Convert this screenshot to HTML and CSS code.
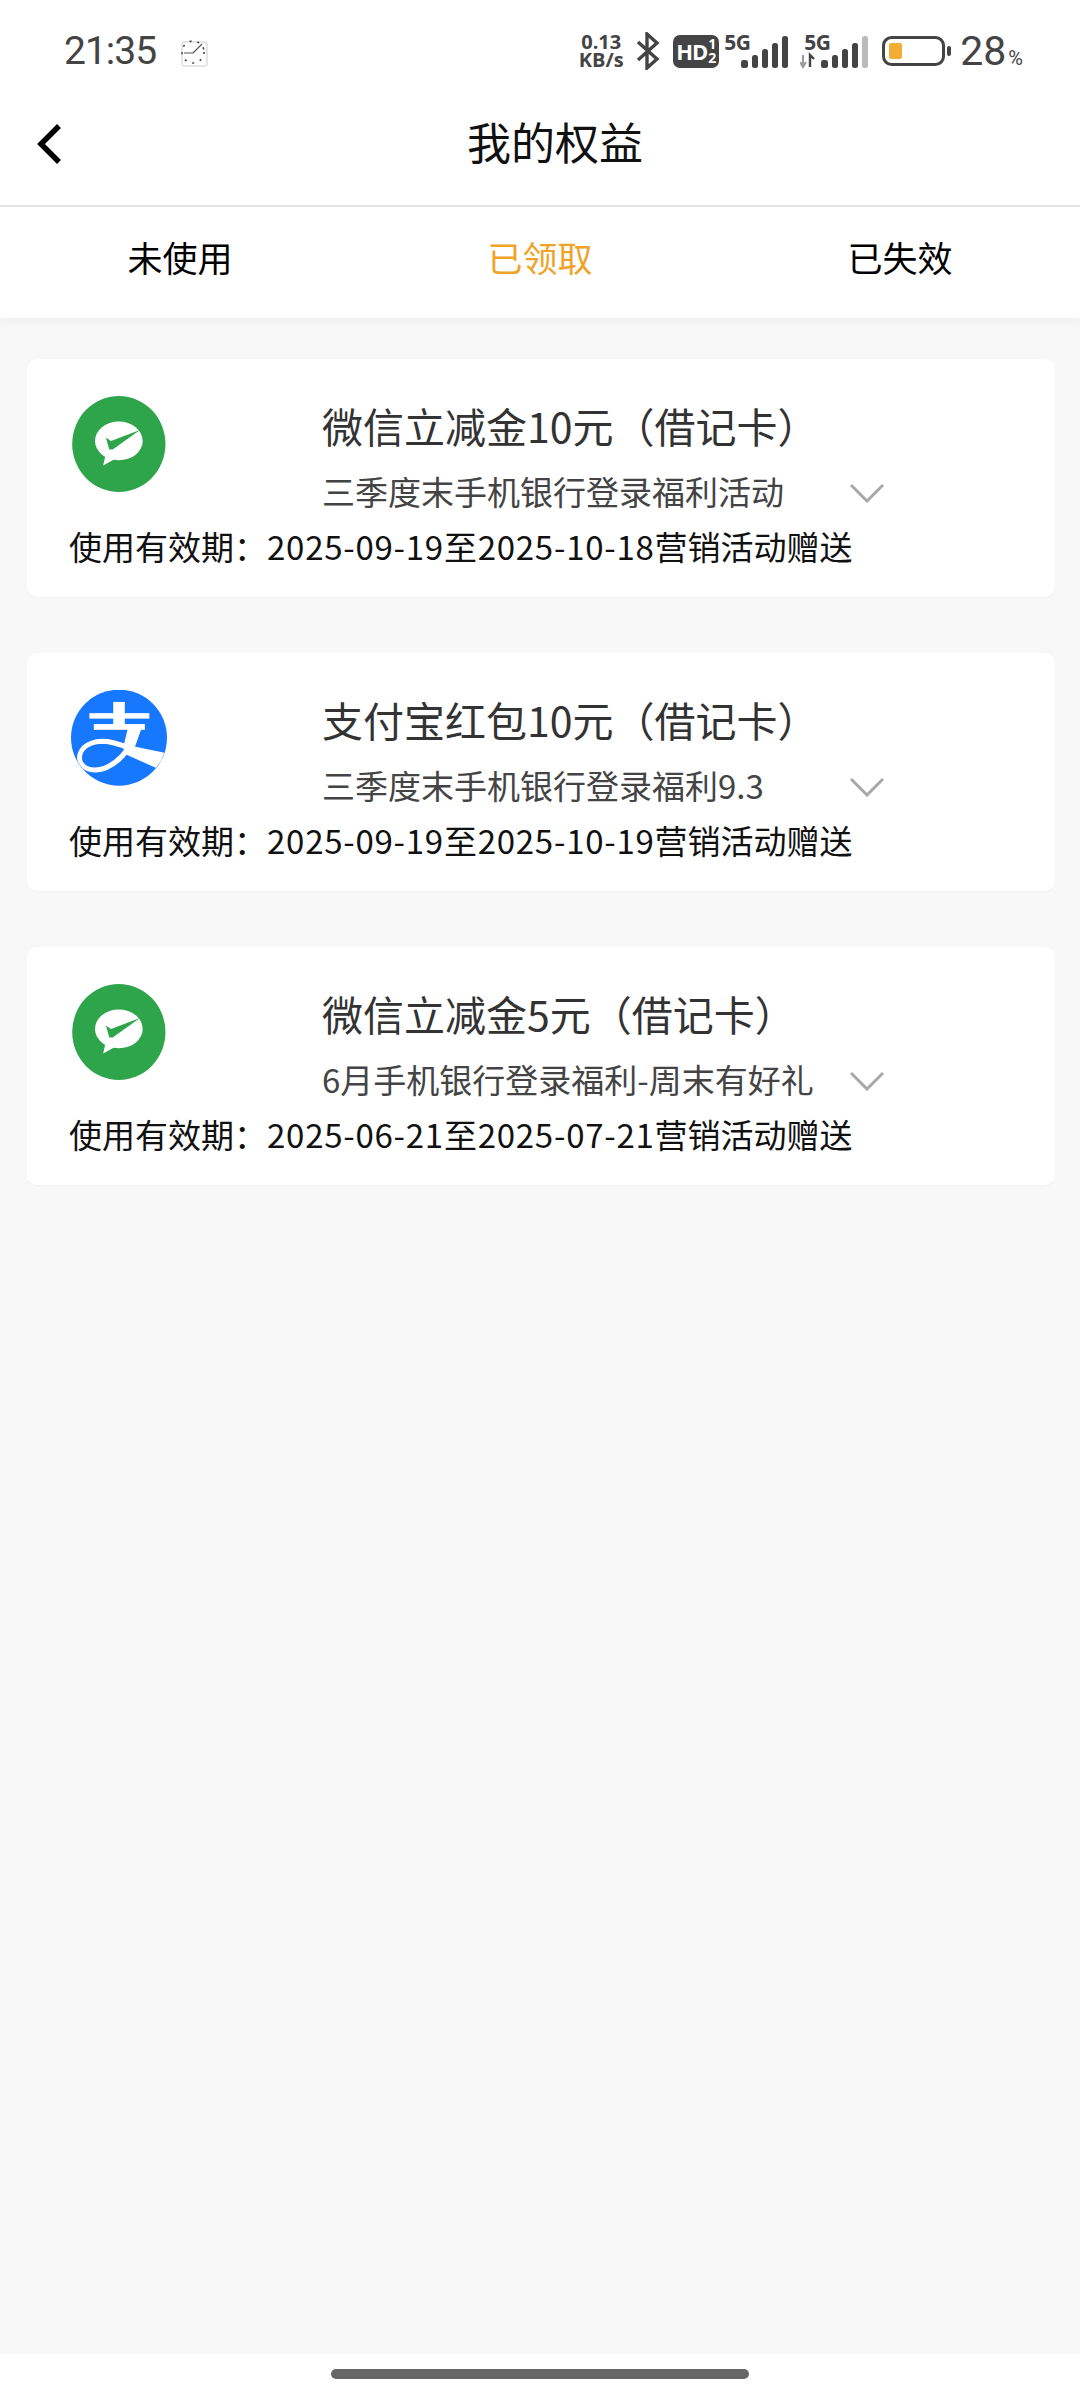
FILE: index.html
```html
<!DOCTYPE html>
<html lang="zh-CN">
<head>
  <meta charset="UTF-8" />
  <meta name="viewport" content="width=device-width, initial-scale=1.0"/>
  <title>我的权益</title>
  <link rel="stylesheet" href="styles.css">
</head>
<body>
  <div class="page">
    <div class="status-bar">
      <div class="status-left">
        <span class="time">21:35</span>
        <svg class="clock" width="27" height="31" viewBox="0 0 27 31">
          <rect x="1" y="6" width="25" height="24" rx="2" fill="#fff" stroke="#ccc"/>
          <g stroke="#444" stroke-width="1.6" stroke-dasharray="2 6" fill="none"><circle cx="12" cy="16" r="11"/></g>
          <path d="M12 17H3M12 17L21 8" stroke="#555" stroke-width="1.2"/>
        </svg>
      </div>
      <div class="status-right">
        <div class="net-speed">0.13<br>KB/s</div>
        <svg class="bt" width="24" height="38" viewBox="0 0 24 38">
          <path d="M2 10L21 27L11 36V2L21 11L2 28" fill="none" stroke="#444" stroke-width="3.4"/>
        </svg>
        <div class="hd"><span class="hd-text">HD</span><span class="hd-num">1<br>2</span></div>
        <div class="signal">
          <span class="sig-text">5G</span>
          <svg width="64" height="36" viewBox="0 0 64 36">
            <rect x="17" y="27" width="7" height="8" rx="2.5" fill="#444"/>
            <rect x="28" y="22" width="6" height="13" rx="2.5" fill="#444"/>
            <rect x="38" y="16" width="6" height="19" rx="2.5" fill="#444"/>
            <rect x="48" y="10" width="6" height="25" rx="2.5" fill="#444"/>
            <rect x="58" y="3" width="6" height="32" rx="2.5" fill="#444"/>
          </svg>
        </div>
        <div class="signal sig-two">
          <span class="sig-text">5G</span>
          <svg width="68" height="36" viewBox="0 0 68 36">
            <path d="M3 22V34M0 29L3 34L6 29" stroke="#999" stroke-width="2" fill="none"/>
            <path d="M10 34V22L14 26" stroke="#444" stroke-width="2.4" fill="none"/>
            <rect x="21" y="27" width="7" height="8" rx="2.5" fill="#444"/>
            <rect x="32" y="22" width="6" height="13" rx="2.5" fill="#444"/>
            <rect x="42" y="16" width="6" height="19" rx="2.5" fill="#444"/>
            <rect x="52" y="10" width="6" height="25" rx="2.5" fill="#444"/>
            <rect x="62" y="3" width="6" height="32" rx="2.5" fill="#bbb"/>
          </svg>
        </div>
        <svg class="battery" width="70" height="30" viewBox="0 0 70 30">
          <rect x="1.5" y="1.5" width="60" height="27" rx="8" fill="#fff" stroke="#444" stroke-width="3"/>
          <rect x="7" y="7" width="13" height="16" rx="2" fill="#f3ac35"/>
          <rect x="65" y="10" width="4" height="10" rx="2" fill="#444"/>
        </svg>
        <span class="batt-text">28<small>%</small></span>
      </div>
    </div>

    <div class="header">
      <svg class="back" width="26" height="42" viewBox="0 0 26 42">
        <path d="M23 3L5 21L23 39" fill="none" stroke="#000" stroke-width="5.5"/>
      </svg>
      <h1>我的权益</h1>
    </div>

    <div class="tabs">
      <div class="tab">未使用</div>
      <div class="tab active">已领取</div>
      <div class="tab">已失效</div>
    </div>

    <div class="list">
      <div class="card">
        <div class="card-top">
          <svg class="logo" viewBox="212 168 273 282">
            <ellipse cx="348" cy="309" rx="137" ry="141" fill="#2ea44b"/>
            <ellipse cx="348" cy="300" rx="70" ry="57" fill="#fff"/>
            <path d="M308 345L302 372L338 352Z" fill="#fff"/>
            <path d="M310 290L325 300L410 268L330 325L320 325Z" fill="#2ea44b"/>
          </svg>
          <div class="card-text">
            <div class="card-title">微信立减金10元（借记卡）</div>
            <div class="card-sub"><span>三季度末手机银行登录福利活动</span>
              <svg class="chev" width="34" height="20" viewBox="0 0 34 20"><path d="M1 2L17 18L33 2" fill="none" stroke="#a8a8a8" stroke-width="3"/></svg>
            </div>
          </div>
        </div>
        <div class="card-date">使用有效期：<span class="date-range">2025-09-19至2025-10-18</span>营销活动赠送</div>
      </div>

      <div class="card">
        <div class="card-top">
          <svg class="logo" viewBox="98 60 282 282">
            <defs><clipPath id="aliClip"><circle cx="239" cy="200" r="140"/></clipPath></defs>
            <circle cx="239" cy="200" r="141" fill="#1677ff"/>
            <g clip-path="url(#aliClip)" fill="#fff">
              <rect x="152" y="128" width="176" height="16"/>
              <rect x="222" y="95" width="34" height="70"/>
              <rect x="165" y="160" width="150" height="17"/>
              <path d="M297 172C275 235 225 293 170 295C135 296 118 272 125 248C133 220 172 203 222 215C270 227 325 250 368 272" fill="none" stroke="#fff" stroke-width="15"/>
              <path d="M280 225L385 247L350 290L250 245Z"/>
              <path d="M265 172H305L285 230L250 235Z"/>
            </g>
            <path d="M132 250C138 225 175 212 215 222C232 227 240 233 246 238C225 265 200 284 170 286C142 287 126 272 132 250Z" fill="#1677ff"/>
          </svg>
          <div class="card-text">
            <div class="card-title">支付宝红包10元（借记卡）</div>
            <div class="card-sub"><span>三季度末手机银行登录福利9.3</span>
              <svg class="chev" width="34" height="20" viewBox="0 0 34 20"><path d="M1 2L17 18L33 2" fill="none" stroke="#a8a8a8" stroke-width="3"/></svg>
            </div>
          </div>
        </div>
        <div class="card-date">使用有效期：<span class="date-range">2025-09-19至2025-10-19</span>营销活动赠送</div>
      </div>

      <div class="card">
        <div class="card-top">
          <svg class="logo" viewBox="212 168 273 282">
            <ellipse cx="348" cy="309" rx="137" ry="141" fill="#2ea44b"/>
            <ellipse cx="348" cy="300" rx="70" ry="57" fill="#fff"/>
            <path d="M308 345L302 372L338 352Z" fill="#fff"/>
            <path d="M310 290L325 300L410 268L330 325L320 325Z" fill="#2ea44b"/>
          </svg>
          <div class="card-text">
            <div class="card-title">微信立减金5元（借记卡）</div>
            <div class="card-sub"><span>6月手机银行登录福利-周末有好礼</span>
              <svg class="chev" width="34" height="20" viewBox="0 0 34 20"><path d="M1 2L17 18L33 2" fill="none" stroke="#a8a8a8" stroke-width="3"/></svg>
            </div>
          </div>
        </div>
        <div class="card-date">使用有效期：<span class="date-range">2025-06-21至2025-07-21</span>营销活动赠送</div>
      </div>
    </div>

    <div class="home-bar"><div class="home-pill"></div></div>
  </div>
</body>
</html>
```

FILE: styles.css
```css
body {
  margin: 0;
  padding: 0;
  font-family: "Noto Sans CJK SC", "Noto Sans", sans-serif;
  color: #000;
}

.page {
  height: 100vh;
  display: flex;
  flex-direction: column;
  background: #f8f8f8;
  overflow: hidden;
}

/* status bar */
.status-bar {
  height: 88px;
  background: #fff;
  display: flex;
  justify-content: space-between;
  align-items: center;
  padding: 0 57px 0 64px;
  color: #444;
  font-family: "Open Sans", sans-serif;
}

.status-left {
  display: flex;
  align-items: center;
  gap: 25px;
  margin-top: 14px;
}

.time {
  font-family: Roboto, sans-serif;
  font-size: 39px;
  line-height: 44px;
  letter-spacing: -1px;
}

.status-right {
  display: flex;
  align-items: center;
  margin-top: 14px;
}

.net-speed {
  width: 48px;
  font-size: 20px;
  font-weight: 700;
  line-height: 18px;
  text-align: center;
  white-space: nowrap;
  margin-right: 11px;
}

.bt {
  margin-right: 13px;
}

.hd {
  width: 46px;
  height: 33px;
  border-radius: 7px;
  background: #444;
  color: #fff;
  display: flex;
  align-items: center;
  justify-content: center;
  font-weight: 700;
  margin-right: 5px;
}

.hd-text {
  font-size: 22px;
  line-height: 26px;
  letter-spacing: -1px;
}

.hd-num {
  font-size: 14px;
  line-height: 14px;
  margin-left: 1px;
  text-align: center;
}

.signal {
  position: relative;
  width: 64px;
  height: 36px;
  margin-right: 12px;
}

.signal svg {
  display: block;
}

.sig-two {
  width: 68px;
  margin-right: 14px;
}

.sig-text {
  position: absolute;
  left: 0;
  top: 0;
  font-size: 21px;
  font-weight: 700;
  line-height: 18px;
  letter-spacing: -0.5px;
}

.sig-two .sig-text {
  left: 4px;
}

.batt-text {
  font-family: Roboto, sans-serif;
  font-size: 41px;
  line-height: 44px;
  margin-left: 8px;
  margin-top: 6px;
}

.batt-text small {
  font-size: 20px;
  margin-left: 2px;
}

/* header */
.header {
  height: 117px;
  background: #fff;
  border-bottom: 2px solid #e3e3e3;
  display: flex;
  align-items: center;
  justify-content: center;
  position: relative;
}

.back {
  position: absolute;
  left: 36px;
  top: 35px;
}

h1 {
  margin: -12px 0 0 30px;
  font-size: 44px;
  font-weight: 400;
  color: #111;
}

/* tabs */
.tabs {
  height: 111px;
  box-sizing: border-box;
  padding-bottom: 12px;
  background: #fff;
  display: grid;
  grid-template-columns: 1fr 1fr 1fr;
  align-items: center;
  text-align: center;
  font-size: 35px;
  box-shadow: 0 4px 10px rgba(0, 0, 0, 0.04);
}

.tab.active {
  color: #f0a32a;
}

/* cards */
.list {
  flex: 1;
  padding: 41px 25px 0 27px;
  display: flex;
  flex-direction: column;
  gap: 56px;
}

.card {
  height: 238px;
  box-sizing: border-box;
  background: #fff;
  border-radius: 10px;
  box-shadow: 0 1px 2px rgba(0, 0, 0, 0.03);
  padding: 37px 0 0 44px;
}

.card-top {
  display: flex;
  align-items: flex-start;
}

.logo {
  width: 96px;
  height: 96px;
  flex-shrink: 0;
}

.card-text {
  margin-left: 155px;
  width: 562px;
  margin-top: 5px;
}

.card-title {
  font-size: 41px;
  line-height: 48px;
  color: #333;
}

.card-sub {
  display: flex;
  justify-content: space-between;
  align-items: center;
  margin-top: 22px;
  height: 40px;
  font-size: 33px;
  color: #444;
}

.chev {
  margin-top: 3px;
}

.card-date {
  font-size: 33px;
  line-height: 40px;
  margin-left: -2px;
  margin-top: 15px;
  color: #111;
}

.date-range {
  letter-spacing: 0.75px;
}

/* bottom */
.home-bar {
  height: 46px;
  background: #fff;
  display: flex;
  justify-content: center;
  padding-top: 15px;
  box-sizing: border-box;
}

.home-pill {
  width: 418px;
  height: 10px;
  border-radius: 5px;
  background: #666;
}
```
